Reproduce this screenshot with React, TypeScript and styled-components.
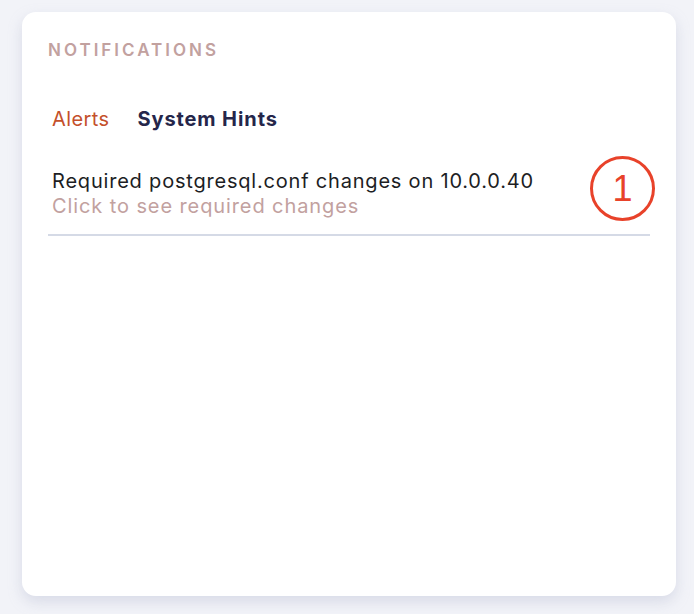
import React from "react";
import styled, { createGlobalStyle } from "styled-components";

const Global = createGlobalStyle`
html, body {
  margin: 0;
  padding: 0;
  background: #f2f3f8;
  font-family: Inter, "Open Sans", "Liberation Sans", sans-serif;
}
`;

const Page = styled.div`
  padding: 12px 18px 18px 22px;
`;

const Card = styled.div`
  background: #ffffff;
  border-radius: 14px;
  height: 584px;
  box-sizing: border-box;
  padding: 27px 26px 0 26px;
  box-shadow: 0 6px 14px rgba(170, 175, 200, 0.35);
`;

const Title = styled.div`
  font-size: 17px;
  font-weight: 600;
  letter-spacing: 3px;
  color: #c2a19f;
  line-height: 22px;
`;

const Tabs = styled.div`
  display: flex;
  gap: 28px;
  margin-top: 46px;
  padding-left: 4px;
`;

const Tab = styled.div<{ $active?: boolean }>`
  font-size: 20px;
  line-height: 24px;
  font-weight: ${(p) => (p.$active ? 700 : 400)};
  letter-spacing: ${(p) => (p.$active ? "0.9px" : "0.4px")};
  color: ${(p) => (p.$active ? "#25264a" : "#c4502b")};
`;

const Item = styled.div`
  display: flex;
  align-items: center;
  justify-content: space-between;
  margin-top: 33px;
  padding: 0 0 13px 4px;
  border-bottom: 2px solid #d5dae6;
`;

const Texts = styled.div`
  display: flex;
  flex-direction: column;
`;

const ItemTitle = styled.div`
  font-size: 20px;
  line-height: 26px;
  letter-spacing: 0.8px;
  color: #1d1e24;
`;

const ItemSub = styled.div`
  font-size: 20px;
  line-height: 24px;
  letter-spacing: 0.9px;
  color: #c2a19f;
`;

const Badge = styled.div`
  width: 59px;
  height: 59px;
  border: 3px solid #e8422a;
  border-radius: 50%;
  display: flex;
  align-items: center;
  justify-content: center;
  font-size: 36px;
  color: #e8422a;
  margin: -8px -5px 0 0;
  font-family: "Liberation Sans", sans-serif;
`;

export default function App() {
  return (
    <Page>
      <Global />
      <Card>
        <Title>NOTIFICATIONS</Title>
        <Tabs>
          <Tab>Alerts</Tab>
          <Tab $active>System Hints</Tab>
        </Tabs>
        <Item>
          <Texts>
            <ItemTitle>Required postgresql.conf changes on 10.0.0.40</ItemTitle>
            <ItemSub>Click to see required changes</ItemSub>
          </Texts>
          <Badge>1</Badge>
        </Item>
      </Card>
    </Page>
  );
}
